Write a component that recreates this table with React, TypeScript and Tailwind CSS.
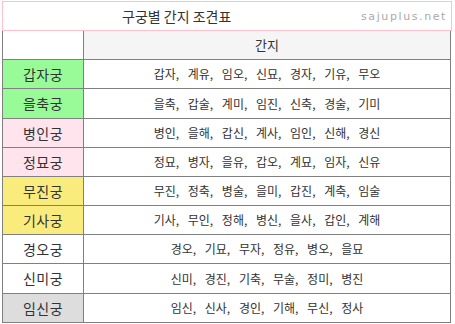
const rows = [
  { name: "갑자궁", bg: "bg-[#98fb98]", h: "h-[29px]", items: "갑자, 계유, 임오, 신묘, 경자, 기유, 무오" },
  { name: "을축궁", bg: "bg-[#98fb98]", h: "h-[30px]", items: "을축, 갑술, 계미, 임진, 신축, 경술, 기미" },
  { name: "병인궁", bg: "bg-[#ffe4ee]", h: "h-[29px]", items: "병인, 을해, 갑신, 계사, 임인, 신해, 경신" },
  { name: "정묘궁", bg: "bg-[#ffe4ee]", h: "h-[29px]", items: "정묘, 병자, 을유, 갑오, 계묘, 임자, 신유" },
  { name: "무진궁", bg: "bg-[#faeb7d]", h: "h-[29px]", items: "무진, 정축, 병술, 을미, 갑진, 계축, 임술" },
  { name: "기사궁", bg: "bg-[#faeb7d]", h: "h-[29px]", items: "기사, 무인, 정해, 병신, 을사, 갑인, 계해" },
  { name: "경오궁", bg: "bg-white", h: "h-[29px]", items: "경오, 기묘, 무자, 정유, 병오, 을묘" },
  { name: "신미궁", bg: "bg-white", h: "h-[30px]", items: "신미, 경진, 기축, 무술, 정미, 병진" },
  { name: "임신궁", bg: "bg-[#dddddd]", h: "h-[29px]", items: "임신, 신사, 경인, 기해, 무신, 정사" },
];

const App = () => {
  return (
    <div className="w-[455px] h-[324px] bg-white pt-[1px] pl-[2px] text-[#333] font-['Noto_Sans_CJK_KR',sans-serif]">
      {/* title bar */}
      <div className="w-[450px] h-[30px] border border-[#ffc0cb] flex items-center">
        <div className="pl-[119px] text-[14px] leading-none">구궁별 간지 조견표</div>
        <div className="ml-auto pr-[4px] text-[11px] tracking-[1.6px] text-[#aaa] font-['DejaVu_Sans',sans-serif] leading-none">
          sajuplus.net
        </div>
      </div>

      {/* table */}
      <div className="w-[449px] border-l border-r border-[#808080]">
        <div className="flex h-[29px] border-b border-[#808080]">
          <div className="w-[81px] border-r border-[#808080] bg-white" />
          <div className="flex-1 bg-[#f5f5f5] flex items-center justify-center text-[13px]">간지</div>
        </div>
        {rows.map((r) => (
          <div key={r.name} className={`flex ${r.h} border-b border-[#808080]`}>
            <div className={`w-[81px] border-r border-[#808080] ${r.bg} flex items-center justify-center text-[14px] tracking-[0.5px]`}>
              {r.name}
            </div>
            <div className="flex-1 flex items-center justify-center text-[12px] [word-spacing:6px]">
              {r.items}
            </div>
          </div>
        ))}
      </div>
    </div>
  );
};

export default App;
